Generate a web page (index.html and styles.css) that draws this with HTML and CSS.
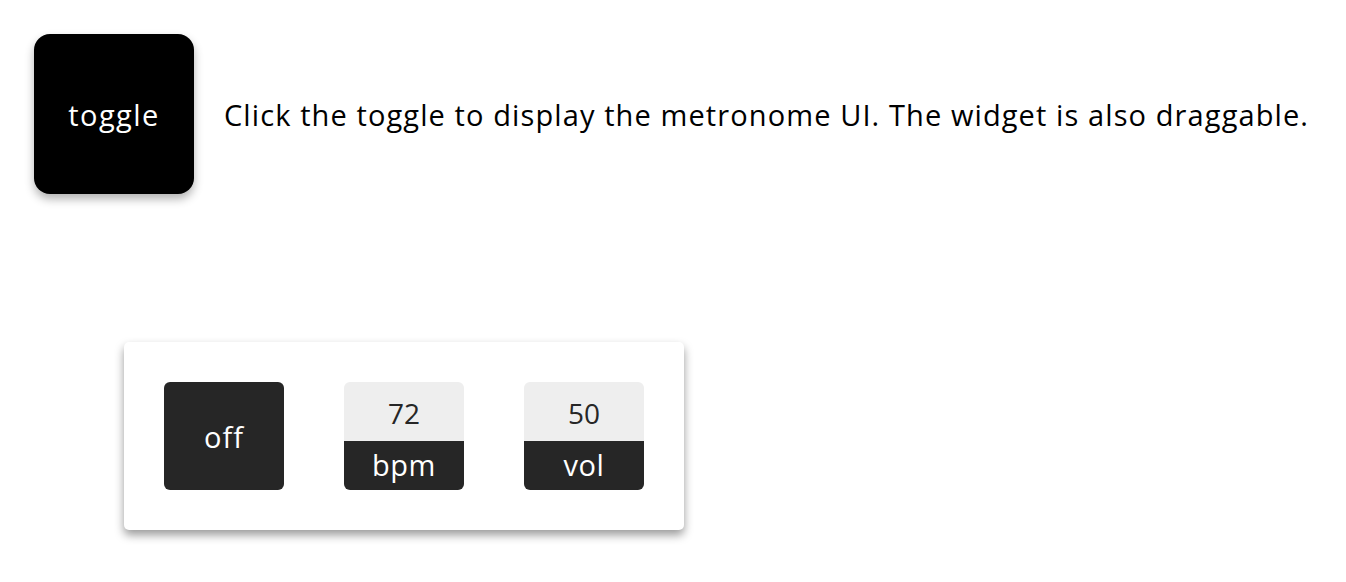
FILE: index.html
```html
<!DOCTYPE html>
<html>
<head>
<meta charset="utf-8">
<link rel="stylesheet" href="styles.css">
</head>
<body>
<div class="page">
  <div class="intro">
    <div class="toggle">toggle</div>
    <p class="hint">Click the toggle to display the metronome UI. The widget is also draggable.</p>
  </div>
  <div class="widget">
    <div class="power">off</div>
    <div class="knob">
      <div class="value">72</div>
      <div class="label">bpm</div>
    </div>
    <div class="knob">
      <div class="value">50</div>
      <div class="label">vol</div>
    </div>
  </div>
</div>
</body>
</html>
```
FILE: styles.css
```css
html, body {
  margin: 0;
  padding: 0;
  background: #fff;
}
body {
  font-family: "Open Sans", "DejaVu Sans", sans-serif;
}
.page {
  padding: 34px 0 40px 34px;
}
.intro {
  display: flex;
  align-items: center;
  gap: 30px;
}
.toggle {
  width: 160px;
  height: 160px;
  flex: none;
  background: #000;
  color: #fff;
  border-radius: 16px;
  box-shadow: 0 5px 10px rgba(0,0,0,0.3);
  display: flex;
  align-items: center;
  justify-content: center;
  font-size: 29px;
  letter-spacing: 1.4px;
}
.hint {
  margin: 0;
  font-size: 29px;
  color: #000;
  letter-spacing: 1.1px;
}
.widget {
  margin: 148px 0 0 90px;
  width: 560px;
  box-sizing: border-box;
  padding: 40px;
  background: #fff;
  border-radius: 5px;
  box-shadow: 0 5px 10px rgba(0,0,0,0.4);
  display: flex;
  gap: 60px;
}
.power {
  width: 120px;
  height: 108px;
  background: #262626;
  color: #fff;
  border-radius: 6px;
  display: flex;
  align-items: center;
  justify-content: center;
  font-size: 29px;
  letter-spacing: 1px;
}
.knob {
  width: 120px;
  height: 108px;
  border-radius: 6px;
  overflow: hidden;
  display: flex;
  flex-direction: column;
}
.value {
  height: 59px;
  background: #eeeeee;
  color: #262626;
  display: flex;
  align-items: center;
  justify-content: center;
  font-size: 28px;
  padding-top: 2px;
  box-sizing: border-box;
}
.label {
  flex: 1;
  background: #262626;
  color: #fff;
  display: flex;
  align-items: center;
  justify-content: center;
  font-size: 29px;
  letter-spacing: 0.5px;
  padding-bottom: 2px;
}
```
